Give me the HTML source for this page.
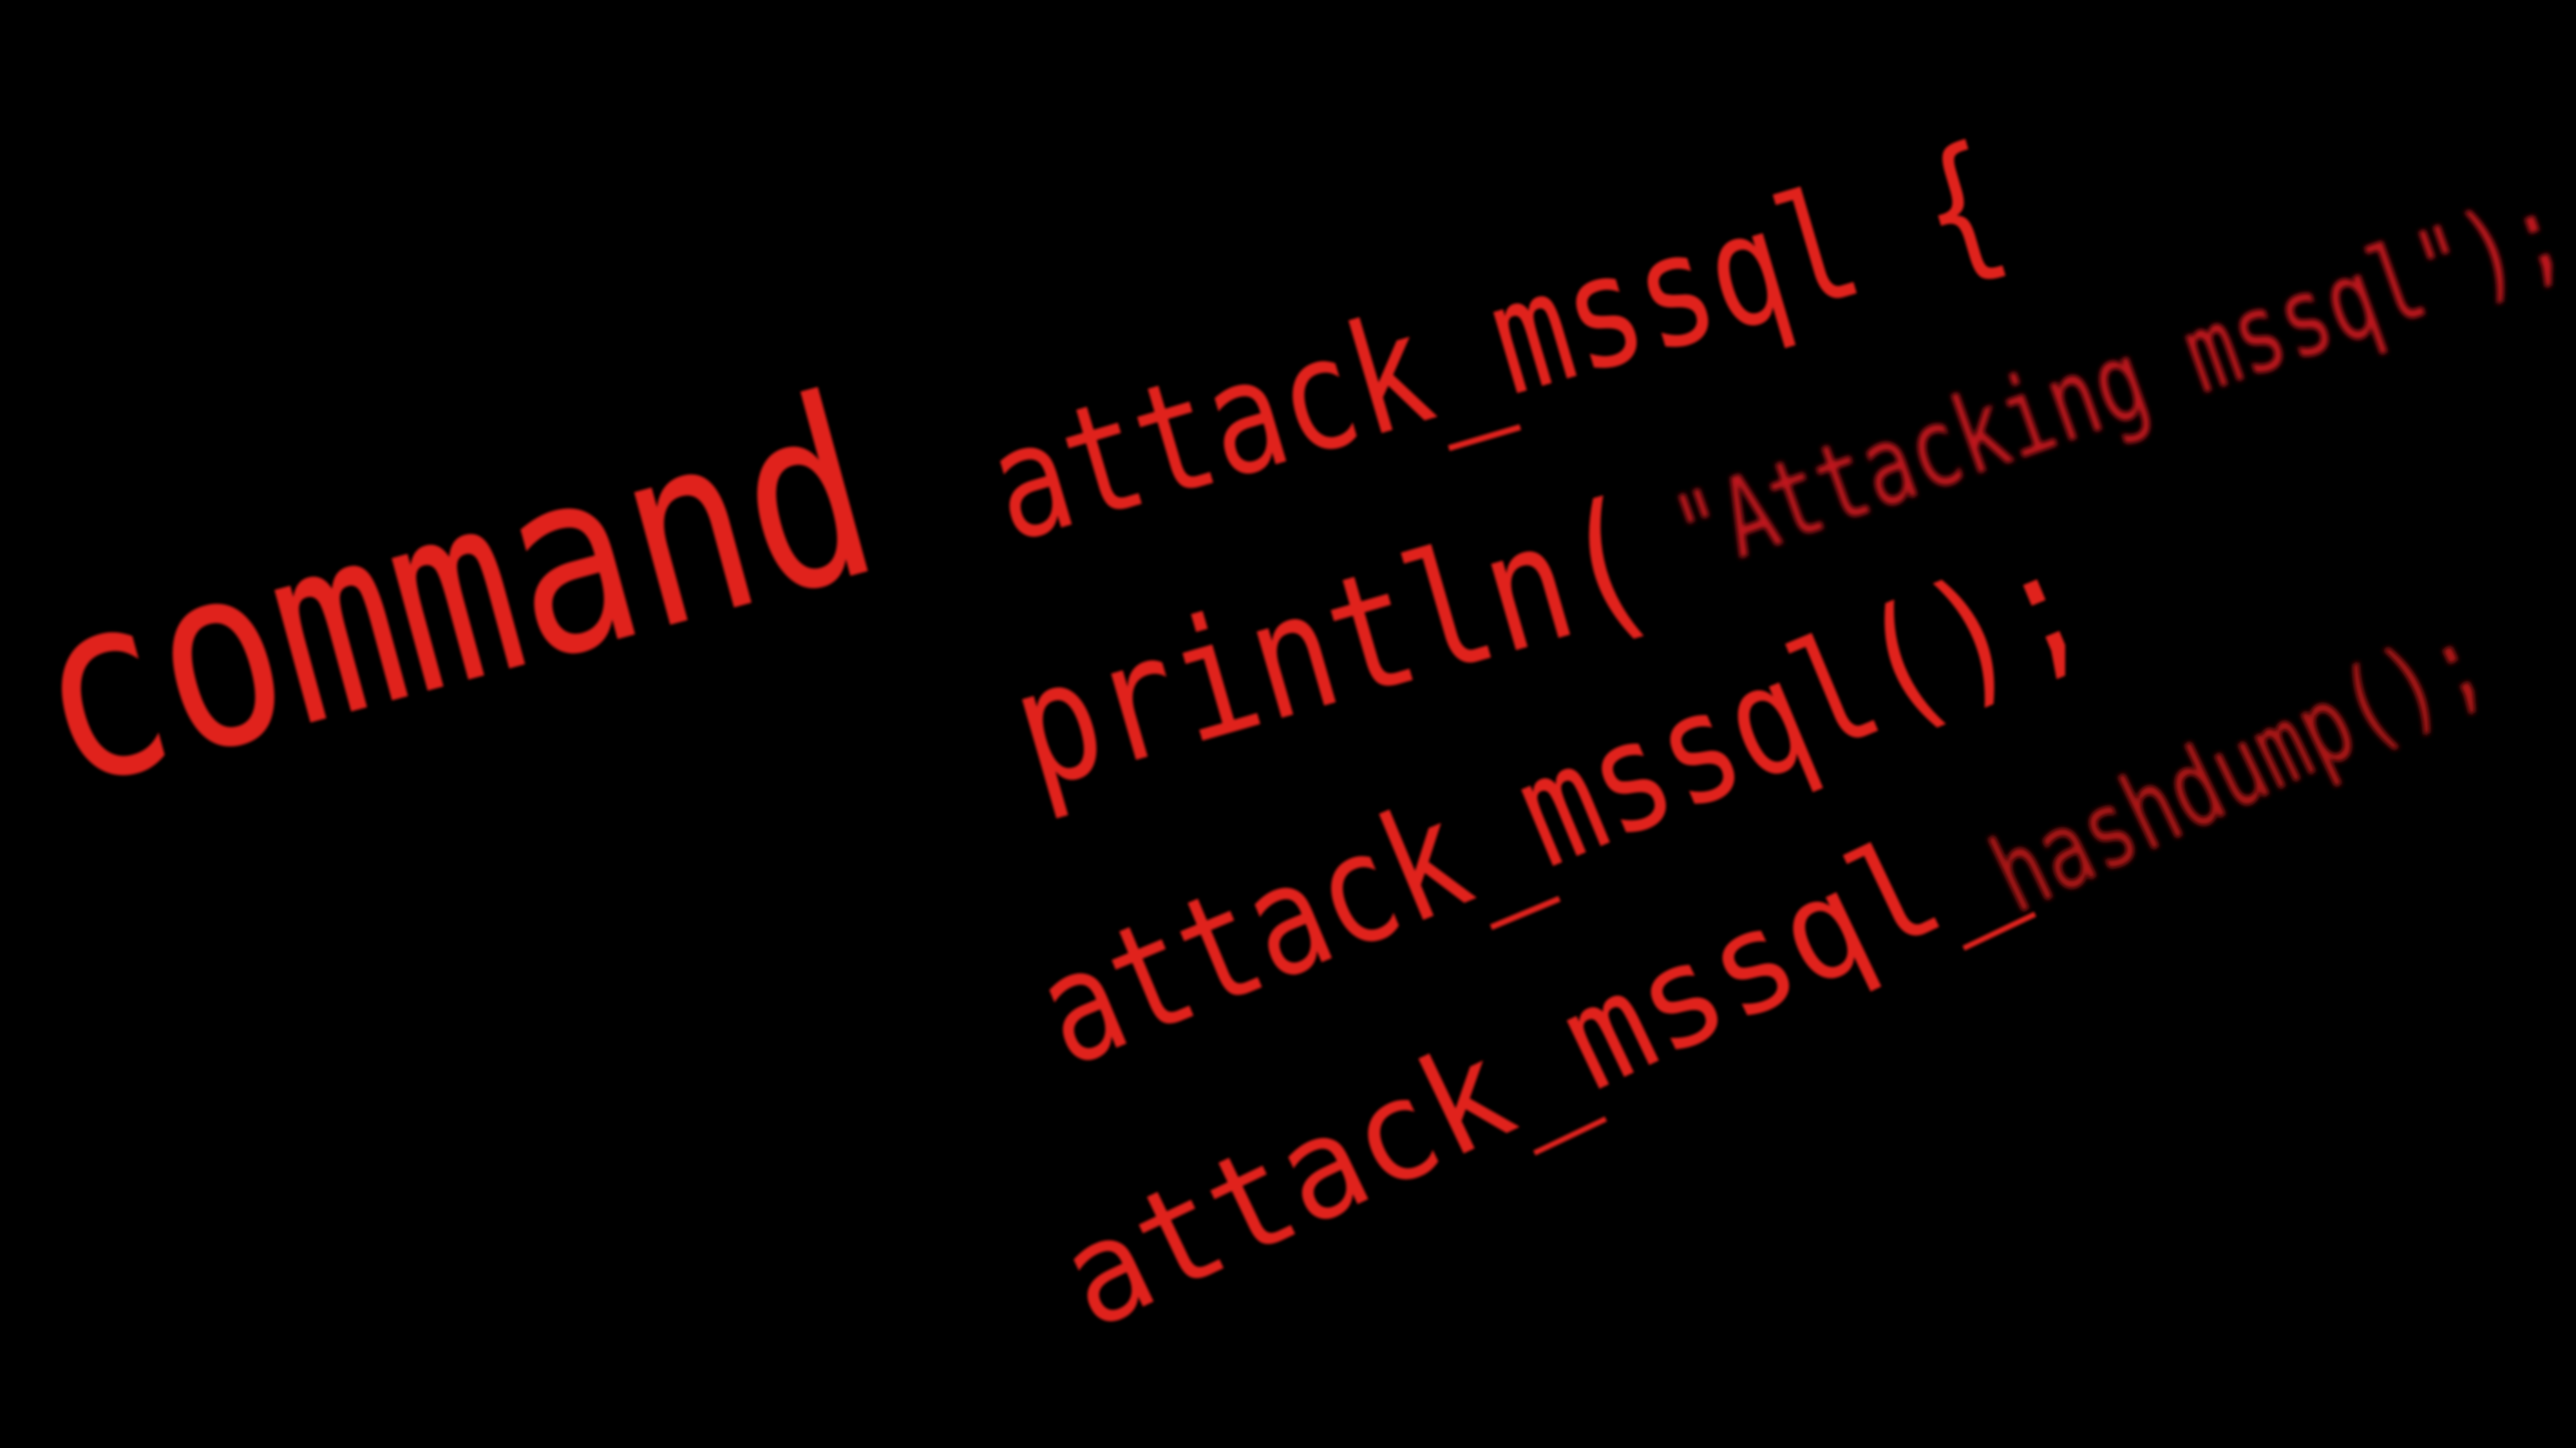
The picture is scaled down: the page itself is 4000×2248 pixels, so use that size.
<!DOCTYPE html>
<html><head><meta charset="utf-8"><style>
html,body{margin:0;padding:0;background:#000;width:4000px;height:2248px;overflow:hidden}
svg{display:block}
text{font-family:"DejaVu Sans Mono","Liberation Mono",monospace;fill:#e0201c}
</style></head><body>
<svg width="4000" height="2248" viewBox="0 0 4000 2248" xmlns="http://www.w3.org/2000/svg">
<defs>
<filter id="b1"><feGaussianBlur stdDeviation="2"/></filter>
<filter id="b2"><feGaussianBlur stdDeviation="4"/></filter>
</defs>
<rect width="4000" height="2248" fill="#000"/>
<g filter="url(#b1)">
<text transform="translate(102,1225) rotate(-15.2)" font-size="390" textLength="1320" lengthAdjust="spacingAndGlyphs">command</text>
<text transform="translate(1569,842) rotate(-16.4)" font-size="240" textLength="1620" lengthAdjust="spacingAndGlyphs">attack_mssql {</text>
<text transform="translate(1607,1225) rotate(-16.1)" font-size="255" textLength="1010" lengthAdjust="spacingAndGlyphs">println(</text>
<text transform="translate(1658,1658) rotate(-22.6)" font-size="235" textLength="1727" lengthAdjust="spacingAndGlyphs">attack_mssql();</text>
<text transform="translate(1696,2066) rotate(-25.5)" font-size="215" textLength="1600" lengthAdjust="spacingAndGlyphs">attack_mssql_</text>
</g>
<g filter="url(#b2)">
<text transform="translate(2628,893) rotate(-19.6)" font-size="170" textLength="1449" lengthAdjust="spacingAndGlyphs" style="fill:#c0181a">"Attacking mssql");</text>
<text transform="translate(3130,1420) rotate(-25.5)" font-size="165" textLength="820" lengthAdjust="spacingAndGlyphs" style="fill:#b01618">hashdump();</text>
</g>
</svg>
</body></html>
